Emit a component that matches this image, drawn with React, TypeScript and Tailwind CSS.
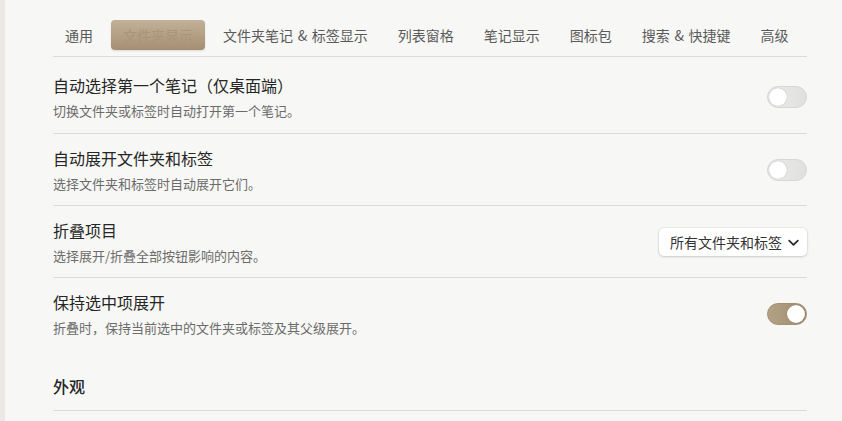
import React from 'react';

const TABS = ['通用', '文件夹显示', '文件夹笔记 & 标签显示', '列表窗格', '笔记显示', '图标包', '搜索 & 快捷键', '高级'];

type Row = {
  title: string;
  desc: string;
  control: 'off' | 'on' | 'select';
};

const ROWS: Row[] = [
  { title: '自动选择第一个笔记（仅桌面端）', desc: '切换文件夹或标签时自动打开第一个笔记。', control: 'off' },
  { title: '自动展开文件夹和标签', desc: '选择文件夹和标签时自动展开它们。', control: 'off' },
  { title: '折叠项目', desc: '选择展开/折叠全部按钮影响的内容。', control: 'select' },
  { title: '保持选中项展开', desc: '折叠时，保持当前选中的文件夹或标签及其父级展开。', control: 'on' },
];

function Toggle({ on }: { on: boolean }) {
  return (
    <div
      className={
        'relative h-[22px] w-[40px] rounded-full border ' +
        (on
          ? 'border-[#a49073] bg-gradient-to-r from-[#b3a287] to-[#a08b6d]'
          : 'border-[#d6d6d4] bg-gradient-to-r from-[#ececeb] to-[#e0e0df]')
      }
    >
      <div
        className={
          'absolute top-[1px] h-[18px] w-[18px] rounded-full bg-white shadow-[0_0_1px_rgba(0,0,0,0.35)] ' +
          (on ? 'right-[1px]' : 'left-[1px]')
        }
      />
    </div>
  );
}

function Select() {
  return (
    <div className="flex h-[28px] w-[148px] items-center justify-between rounded-[5px] bg-white pl-[11px] pr-[7px] text-[14px] text-[#333] shadow-[0_1px_3px_rgba(0,0,0,0.15),0_0_0_1px_rgba(0,0,0,0.04)]">
      <span>所有文件夹和标签</span>
      <svg width="13" height="13" viewBox="0 0 12 12" fill="none">
        <path d="M2 4.25L6 8.25l4-4" stroke="#2b2b2b" strokeWidth="1.6" strokeLinecap="round" strokeLinejoin="round" />
      </svg>
    </div>
  );
}

function TabLabel({ text }: { text: string }) {
  const parts = text.split(' & ');
  if (parts.length === 1) return <span>{text}</span>;
  return (
    <span>
      {parts[0]}
      <span className="mx-[1.5px]"> & </span>
      {parts[1]}
    </span>
  );
}

export default function App() {
  return (
    <div
      className="flex h-[421px] w-[842px] overflow-hidden bg-[#f7f7f5]"
      style={{ fontFamily: '"Noto Sans CJK SC", "Noto Sans", sans-serif' }}
    >
      <div className="w-[5px] shrink-0 bg-[#ebe9e6]" />
      <div className="flex-1 pl-[48px] pr-[35px] pt-[20px]">
        {/* tabs */}
        <div className="flex gap-[6px] border-b border-[#dcdbd8] pb-[6px]">
          {TABS.map((t, i) => (
            <div
              key={t}
              className={
                'flex h-[30px] items-center rounded-[4px] px-3 text-[14px] whitespace-nowrap ' +
                (i === 1
                  ? 'bg-gradient-to-b from-[#c1b199] to-[#a68f72] text-[#a8957a] shadow-[0_1px_2px_rgba(0,0,0,0.12)]'
                  : 'text-[#5a5a5a]')
              }
            >
              <TabLabel text={t} />
            </div>
          ))}
        </div>

        {/* rows */}
        {ROWS.map((r, i) => (
          <div
            key={r.title}
            className={
              'flex items-center justify-between ' +
              (i === 0 ? 'pt-[16px] pb-[12px] ' : 'pt-[12px] pb-[11px] ') +
              (i < ROWS.length - 1 ? 'border-b border-[#dcdbd8]' : '')
            }
          >
            <div className="flex flex-col gap-[4px]">
              <div className="text-[16px] leading-[24px] text-[#262626]">{r.title}</div>
              <div className="text-[13px] leading-[20px] text-[#6b6b6b]">{r.desc}</div>
            </div>
            {r.control === 'select' ? <Select /> : <Toggle on={r.control === 'on'} />}
          </div>
        ))}

        {/* section heading */}
        <div className="mt-[25px] border-b border-[#dcdbd8] pb-[12px] text-[16px] font-medium leading-[24px] text-[#262626]">
          外观
        </div>
      </div>
    </div>
  );
}
